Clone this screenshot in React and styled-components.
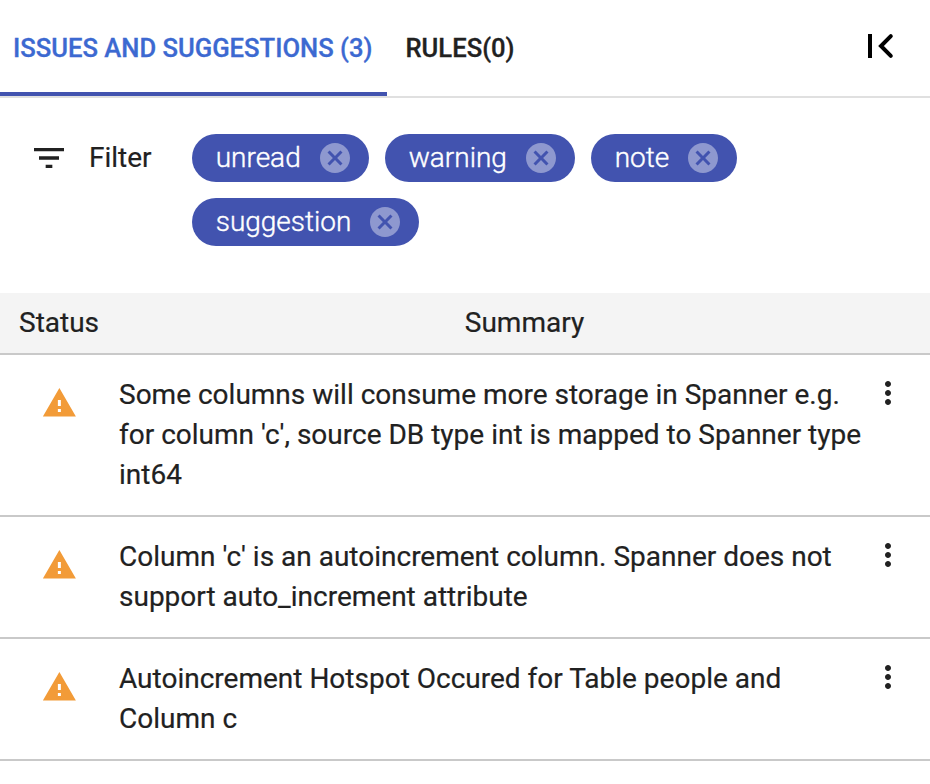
import React from 'react';
import styled, { createGlobalStyle } from 'styled-components';

const Global = createGlobalStyle`
  * { box-sizing: border-box; }
  body { margin: 0; background: #fff; color: #212121; font-family: Roboto, sans-serif; overflow: hidden; }
  svg { display: block; flex: none; }
`;
const Panel = styled.main`
  width: 930px;
  height: 784px;
  background: #fff;
  -webkit-text-stroke: 0.2px currentColor;
`;
const Tabs = styled.header`
  display: flex;
  height: 98px;
  border-bottom: 2px solid #e0e0e0;
`;
const Tab = styled.div`
  height: 96px;
  width: ${p => p.$w}px;
  padding: 0 0 0 ${p => p.$pad}px;
  line-height: 96px;
  font-size: 25.6px;
  font-weight: 500;
  white-space: nowrap;
  color: ${p => (p.$active ? '#3c69d1' : '#212121')};
  -webkit-text-stroke: 0.3px currentColor;
  border-bottom: ${p => (p.$active ? '4px solid #4253af' : '0')};
`;
const Collapse = styled.button`
  margin: 22px 26px 0 auto;
  padding: 0;
  width: 48px;
  height: 48px;
  border: 0;
  background: none;
`;
const Filters = styled.section`
  display: flex;
  height: 195px;
  padding: 36px 0 0 29px;
`;
const FilterLabel = styled.div`
  display: flex;
  width: 163px;
  height: 48px;
  align-items: center;
  font-size: 28px;
  gap: 20px;
`;
const Label = styled.span`
  padding-bottom: 2px;
`;
const Chips = styled.div`
  display: flex;
  flex-wrap: wrap;
  align-content: flex-start;
  gap: 16px;
  width: 580px;
`;
const Chip = styled.div`
  display: flex;
  justify-content: space-between;
  align-items: center;
  width: ${p => p.$w}px;
  height: 48px;
  padding: 0 15.600px 0 23.700px;
  border-radius: 24px;
  background: #4253af;
  color: #fff;
  font-size: 28px;
  font-weight: 300;
  -webkit-text-stroke: 0.4px currentColor;
`;
const HeadRow = styled.div`
  display: flex;
  height: 62px;
  padding: 0 0 2px 19px;
  align-items: center;
  background: #f4f4f4;
  border-bottom: 2px solid #c9c9c9;
  font-size: 28px;
`;
const StatusHead = styled.div`
  width: 100px;
`;
const SummaryHead = styled.div`
  width: 811px;
  text-align: center;
`;
const Row = styled.div`
  display: flex;
  border-bottom: 2px solid #c9c9c9;
  padding: 20px 0 20px 41px;
`;
const Status = styled.div`
  width: 78px;
  padding-top: 10px;
`;
const Summary = styled.div`
  width: 751px;
  font-size: 28px;
  line-height: 40px;
  white-space: pre-line;
`;

const issues = [
  "Some columns will consume more storage in Spanner e.g.\nfor column 'c', source DB type int is mapped to Spanner type\nint64",
  "Column 'c' is an autoincrement column. Spanner does not\nsupport auto_increment attribute",
  'Autoincrement Hotspot Occured for Table people and\nColumn c',
];
const chips = [['unread', 177], ['warning', 190], ['note', 146], ['suggestion', 227]];

export default function App() {
  return (
    <Panel>
      <Global />
      <Tabs>
        <Tab $active $w={387} $pad={13}>ISSUES AND SUGGESTIONS (3)</Tab>
        <Tab $w={160} $pad={18.5}>RULES(0)</Tab>
        <Collapse aria-label="Collapse">
          <svg width="48" height="48" viewBox="0 0 48 48">
            <path d="M12 12h4v24h-4z" />
            <path d="M34.800 14.200L25 24l9.800 9.800" fill="none" stroke="#000" strokeWidth="4" strokeLinecap="round" />
          </svg>
        </Collapse>
      </Tabs>
      <Filters>
        <FilterLabel>
          <svg width="40" height="40" viewBox="0 0 24 24" fill="#212121"><path d="M10 18h4v-2h-4v2zM3 6v2h18V6H3zm3 7h12v-2H6v2z" /></svg>
          <Label>Filter</Label>
        </FilterLabel>
        <Chips>
          {chips.map(([label, w]) => (
            <Chip key={label} $w={w}>
              <Label>{label}</Label>
              <svg width="36" height="36" viewBox="0 0 24 24" fill="#8e98cf"><path d="M12 2C6.47 2 2 6.47 2 12s4.47 10 10 10 10-4.47 10-10S17.53 2 12 2zm5 13.59L15.59 17 12 13.41 8.41 17 7 15.59 10.59 12 7 8.41 8.41 7 12 10.59 15.59 7 17 8.41 13.41 12 17 15.59z" /></svg>
            </Chip>
          ))}
        </Chips>
      </Filters>
      <HeadRow>
        <StatusHead>Status</StatusHead>
        <SummaryHead>Summary</SummaryHead>
      </HeadRow>
      {issues.map(text => (
        <Row key={text}>
          <Status>
            <svg width="36" height="36" viewBox="-0.25 0 24 24" fill="#f29b38"><path d="M1 21h22L12 2 1 21zm12-3h-2v-2h2v2zm0-4h-2v-4h2v4z" /></svg>
          </Status>
          <Summary>{text}</Summary>
          <svg width="36" height="36" viewBox="0 0 24 24" fill="#212121"><path d="M12 8c1.100 0 2-.9 2-2s-.9-2-2-2-2 .9-2 2 .9 2 2 2zm0 2c-1.100 0-2 .9-2 2s.9 2 2 2 2-.9 2-2-.9-2-2-2zm0 6c-1.100 0-2 .9-2 2s.9 2 2 2 2-.9 2-2-.9-2-2-2z" /></svg>
        </Row>
      ))}
    </Panel>
  );
}
